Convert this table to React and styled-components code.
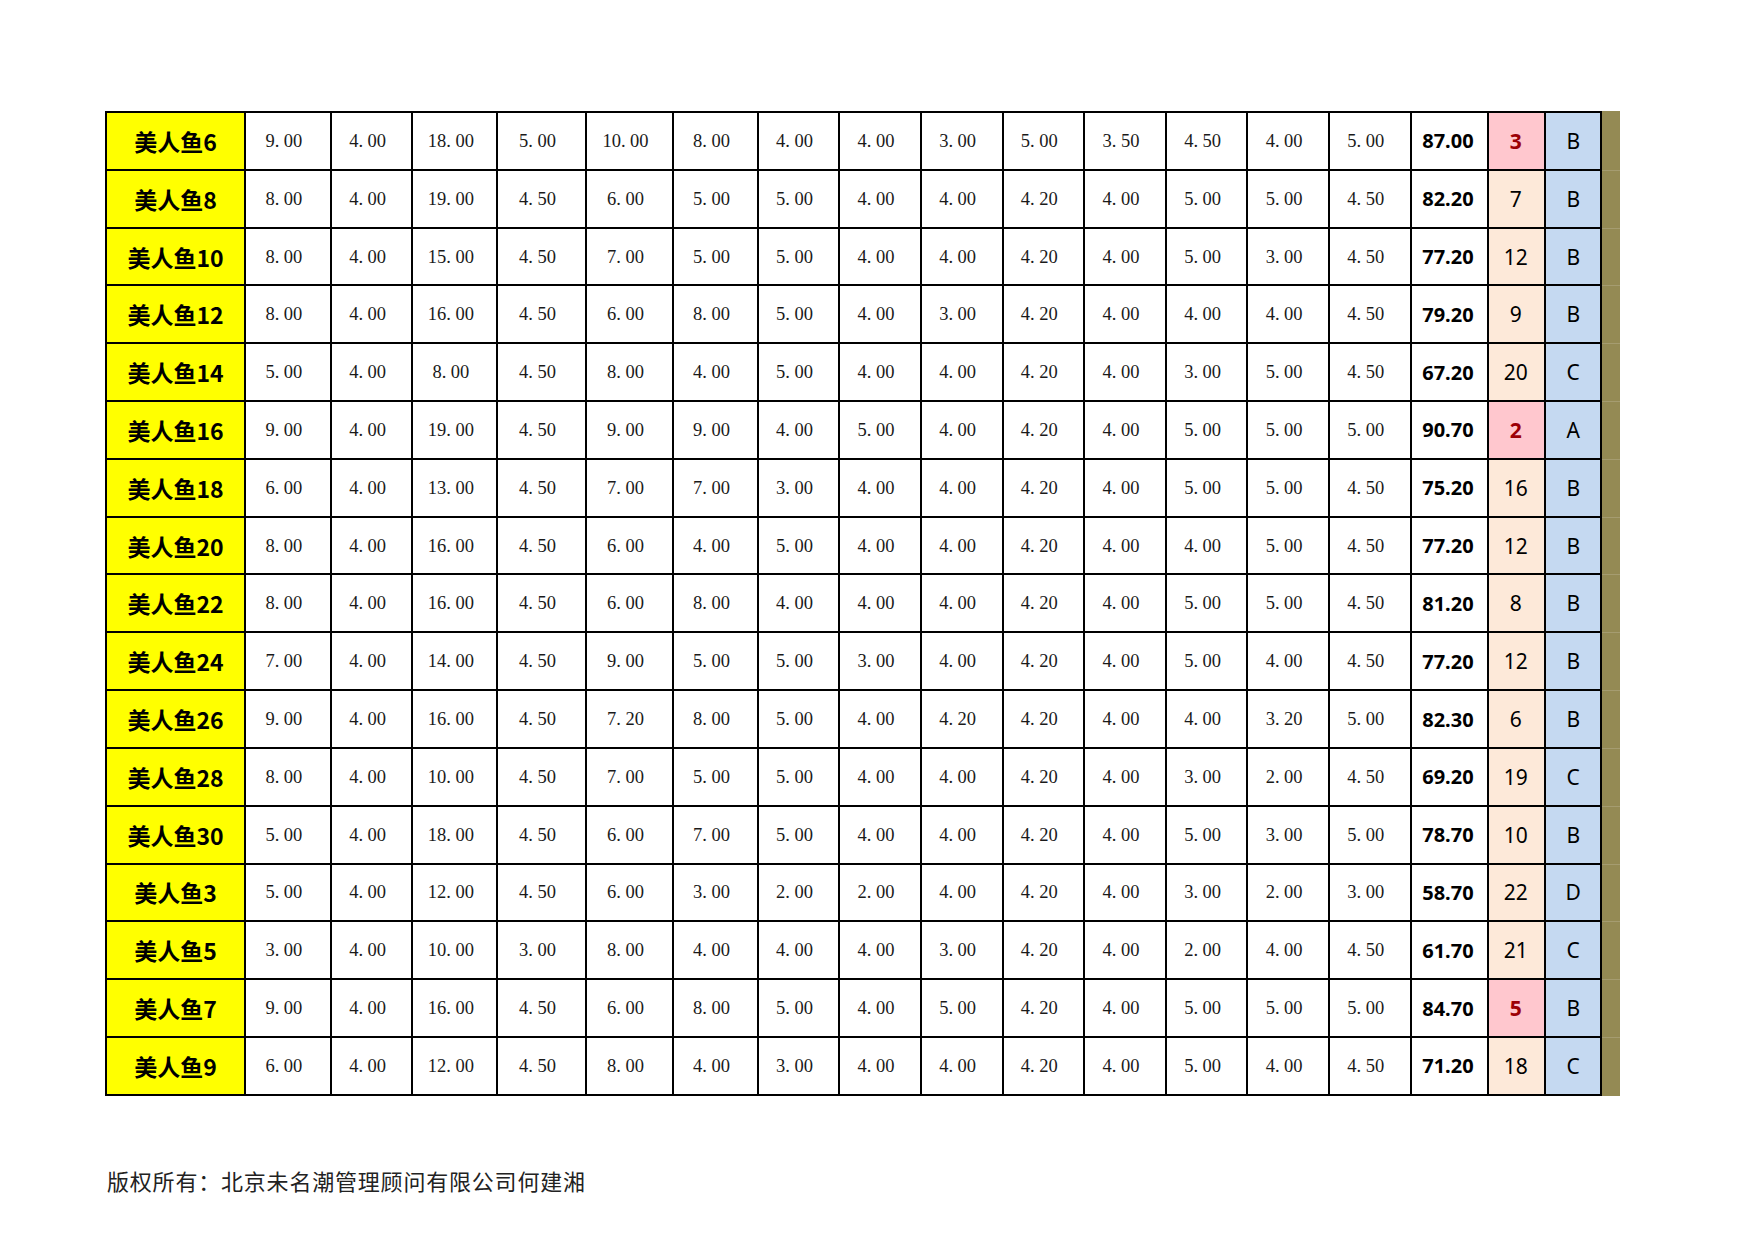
import React from "react";
import styled, { createGlobalStyle } from "styled-components";

const GlobalStyle = createGlobalStyle`
  html, body {
    margin: 0;
    padding: 0;
    background: #fff;
  }
  body {
    font-family: "Noto Sans", "Noto Sans CJK SC", sans-serif;
    color: #000;
  }
`;

// column widths in px, taken from the sheet
const widths = [139, 85.7, 81.8, 84.8, 88.4, 87.6, 84.4, 81.6, 81.4, 82, 81.3, 82, 81.3, 81.7, 81.7, 77.6, 57, 56, 18];

const rows = [
  ["美人鱼6", [9, 4, 18, 5, 10, 8, 4, 4, 3, 5, 3.5, 4.5, 4, 5], 87.0, 3, "B"],
  ["美人鱼8", [8, 4, 19, 4.5, 6, 5, 5, 4, 4, 4.2, 4, 5, 5, 4.5], 82.2, 7, "B"],
  ["美人鱼10", [8, 4, 15, 4.5, 7, 5, 5, 4, 4, 4.2, 4, 5, 3, 4.5], 77.2, 12, "B"],
  ["美人鱼12", [8, 4, 16, 4.5, 6, 8, 5, 4, 3, 4.2, 4, 4, 4, 4.5], 79.2, 9, "B"],
  ["美人鱼14", [5, 4, 8, 4.5, 8, 4, 5, 4, 4, 4.2, 4, 3, 5, 4.5], 67.2, 20, "C"],
  ["美人鱼16", [9, 4, 19, 4.5, 9, 9, 4, 5, 4, 4.2, 4, 5, 5, 5], 90.7, 2, "A"],
  ["美人鱼18", [6, 4, 13, 4.5, 7, 7, 3, 4, 4, 4.2, 4, 5, 5, 4.5], 75.2, 16, "B"],
  ["美人鱼20", [8, 4, 16, 4.5, 6, 4, 5, 4, 4, 4.2, 4, 4, 5, 4.5], 77.2, 12, "B"],
  ["美人鱼22", [8, 4, 16, 4.5, 6, 8, 4, 4, 4, 4.2, 4, 5, 5, 4.5], 81.2, 8, "B"],
  ["美人鱼24", [7, 4, 14, 4.5, 9, 5, 5, 3, 4, 4.2, 4, 5, 4, 4.5], 77.2, 12, "B"],
  ["美人鱼26", [9, 4, 16, 4.5, 7.2, 8, 5, 4, 4.2, 4.2, 4, 4, 3.2, 5], 82.3, 6, "B"],
  ["美人鱼28", [8, 4, 10, 4.5, 7, 5, 5, 4, 4, 4.2, 4, 3, 2, 4.5], 69.2, 19, "C"],
  ["美人鱼30", [5, 4, 18, 4.5, 6, 7, 5, 4, 4, 4.2, 4, 5, 3, 5], 78.7, 10, "B"],
  ["美人鱼3", [5, 4, 12, 4.5, 6, 3, 2, 2, 4, 4.2, 4, 3, 2, 3], 58.7, 22, "D"],
  ["美人鱼5", [3, 4, 10, 3, 8, 4, 4, 4, 3, 4.2, 4, 2, 4, 4.5], 61.7, 21, "C"],
  ["美人鱼7", [9, 4, 16, 4.5, 6, 8, 5, 4, 5, 4.2, 4, 5, 5, 5], 84.7, 5, "B"],
  ["美人鱼9", [6, 4, 12, 4.5, 8, 4, 3, 4, 4, 4.2, 4, 5, 4, 4.5], 71.2, 18, "C"],
];

const Page = styled.div`
  width: 1754px;
  min-height: 1240px;
  padding-top: 111px;
  box-sizing: border-box;
`;

const Sheet = styled.table`
  margin-left: 105px;
  border-collapse: separate;
  border-spacing: 0;
  table-layout: fixed;
  width: ${widths.reduce((a, b) => a + b, 0) + 2}px;
  border-left: 2px solid #000;
`;

const Row = styled.tr`
  height: ${(p) => (p.$first ? 59.8 : 57.82)}px;
`;

const Cell = styled.td`
  padding: 0;
  text-align: center;
  vertical-align: middle;
  border-right: 2px solid #000;
  border-bottom: 2px solid #000;
  border-top: ${(p) => (p.$first ? "2px solid #000" : "none")};
  white-space: nowrap;
  overflow: hidden;
`;

const NameCell = styled(Cell)`
  background: #ffff00;
  font-family: "Noto Sans CJK SC", "Noto Sans", sans-serif;
  font-weight: 700;
  font-size: 23px;
  color: #000;
`;

const NumCell = styled(Cell)`
  background: #fff;
  font-family: "Liberation Serif", serif;
  font-size: 18.5px;
  color: #1a1a1a;
  padding-right: 8px;
  padding-top: 1px;
`;

const Dot = styled.span`
  margin-right: 4.5px;
`;

const TotalCell = styled(Cell)`
  background: #fff;
  font-family: "Noto Sans", sans-serif;
  font-weight: 700;
  font-size: 20px;
  padding-right: 3px;
`;

const RankCell = styled(Cell)`
  background: ${(p) => (p.$top ? "#ffc7ce" : "#fde9d9")};
  color: ${(p) => (p.$top ? "#9c0006" : "#000")};
  font-weight: ${(p) => (p.$top ? 700 : 400)};
  font-family: "Noto Sans", sans-serif;
  font-size: 21px;
  padding-right: 2px;
`;

const GradeCell = styled(Cell)`
  background: #c5d9f1;
  font-family: "Noto Sans", sans-serif;
  font-size: 21px;
`;

const EdgeCell = styled(Cell)`
  background: #948a54;
  border-right: none;
  border-top: ${(p) => (p.$first ? "2px solid #948a54" : "none")};
  border-bottom: ${(p) => (p.$last ? "2px solid #948a54" : "1px solid #a59c70")};
  padding-bottom: ${(p) => (p.$last ? 0 : 1)}px;
`;

const Footer = styled.div`
  margin-top: 73px;
  padding-left: 107px;
  font-family: "Noto Sans CJK SC", sans-serif;
  font-size: 22px;
  letter-spacing: 0.8px;
  line-height: 22px;
  color: #222;
`;

function Num({ value }) {
  const [i, d] = value.toFixed(2).split(".");
  return (
    <>
      {i}
      <Dot>.</Dot>
      {d}
    </>
  );
}

export default function App() {
  return (
    <Page>
      <GlobalStyle />
      <Sheet>
        <colgroup>
          {widths.map((w, i) => (
            <col key={i} style={{ width: w }} />
          ))}
        </colgroup>
        <tbody>
          {rows.map(([name, scores, total, rank, grade], r) => {
            const first = r === 0;
            const last = r === rows.length - 1;
            return (
              <Row key={name} $first={first}>
                <NameCell $first={first}>{name}</NameCell>
                {scores.map((s, c) => (
                  <NumCell key={c} $first={first}>
                    <Num value={s} />
                  </NumCell>
                ))}
                <TotalCell $first={first}>{total.toFixed(2)}</TotalCell>
                <RankCell $first={first} $top={rank <= 5}>
                  {rank}
                </RankCell>
                <GradeCell $first={first}>{grade}</GradeCell>
                <EdgeCell $first={first} $last={last} />
              </Row>
            );
          })}
        </tbody>
      </Sheet>
      <Footer>版权所有：北京未名潮管理顾问有限公司何建湘</Footer>
    </Page>
  );
}
